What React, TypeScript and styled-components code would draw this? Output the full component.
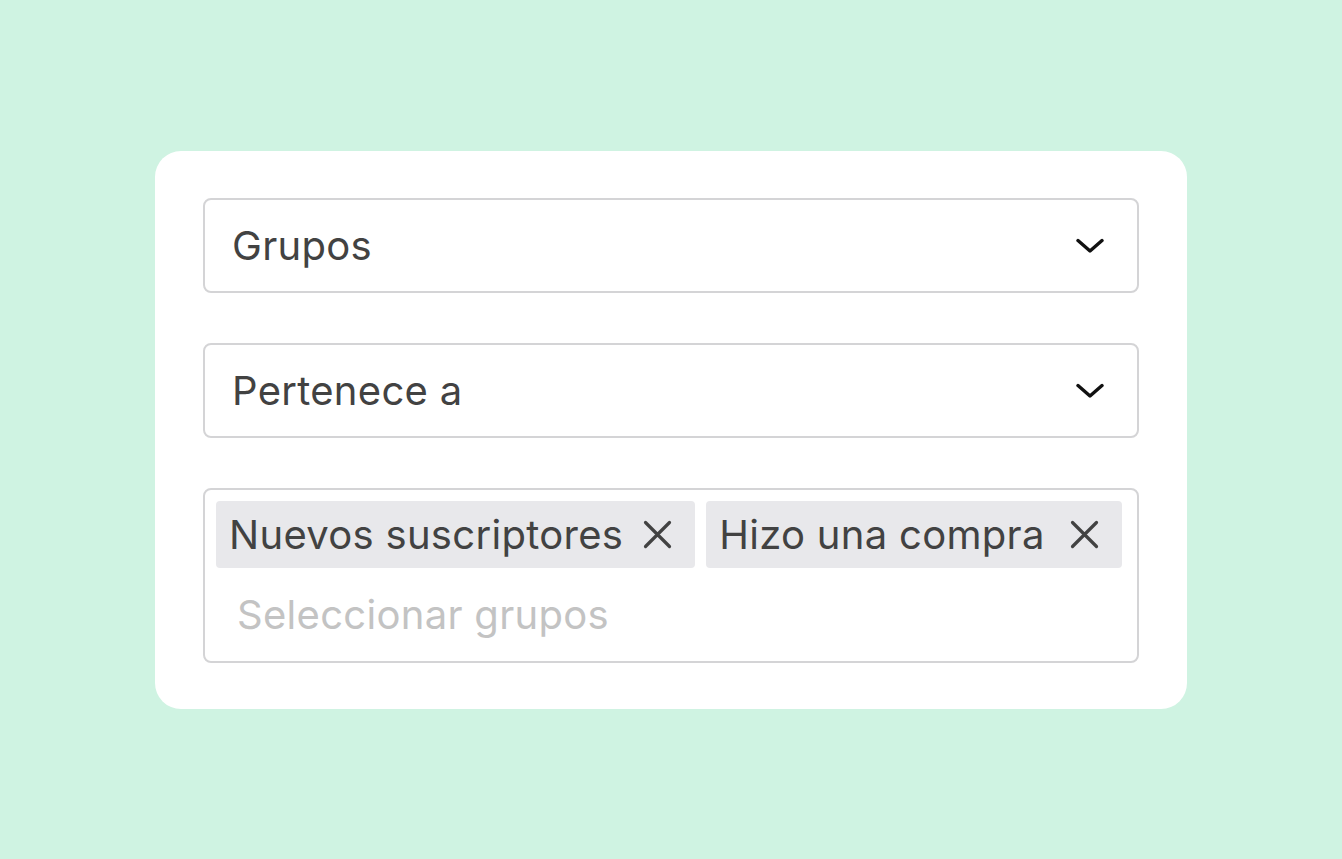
import React from "react";
import styled, { createGlobalStyle } from "styled-components";

const GlobalStyle = createGlobalStyle`
  html, body {
    margin: 0;
    padding: 0;
    background: #cff3e2;
    font-family: Inter, "Noto Sans", sans-serif;
    letter-spacing: 0.3px;
  }
`;

const Page = styled.div`
  width: 1342px;
  height: 859px;
  padding-top: 151px;
  padding-left: 155px;
  box-sizing: border-box;
`;

const Card = styled.div`
  width: 1032px;
  box-sizing: border-box;
  background: #fff;
  border-radius: 26px;
  padding: 47px 48px 46px;
  display: flex;
  flex-direction: column;
  gap: 50px;
`;

const Select = styled.div`
  height: 95px;
  box-sizing: border-box;
  border: 2px solid #d4d4d6;
  border-radius: 8px;
  display: flex;
  align-items: center;
  justify-content: space-between;
  padding: 0 33px 0 27px;
  color: #424242;
  font-size: 40px;
`;

const MultiBox = styled.div`
  height: 175px;
  box-sizing: border-box;
  border: 2px solid #d4d4d6;
  border-radius: 8px;
  padding: 11px 0 0 11px;
  display: flex;
  flex-direction: column;
`;

const ChipRow = styled.div`
  display: flex;
  gap: 11px;
`;

const Chip = styled.div<{ $gap: number }>`
  flex-shrink: 0;
  white-space: nowrap;
  height: 67px;
  background: #e8e8eb;
  border-radius: 4px;
  display: flex;
  align-items: center;
  padding: 0 23px 0 13px;
  gap: ${(p) => p.$gap}px;
  color: #424242;
  font-size: 40px;
`;

const Placeholder = styled.div`
  color: #c3c3c3;
  font-size: 40px;
  padding: 22px 0 0 21px;
`;

const Chevron = () => (
  <svg width="28" height="16" viewBox="0 0 28 16" fill="none">
    <path d="M2 2.5 L14 13 L26 2.5" stroke="#111" strokeWidth="3.4" strokeLinecap="round" strokeLinejoin="round" />
  </svg>
);

const Close = () => (
  <svg width="29" height="29" viewBox="0 0 29 29" fill="none">
    <path d="M2.5 2.5 L26.5 26.5 M26.5 2.5 L2.5 26.5" stroke="#424242" strokeWidth="3.2" strokeLinecap="round" />
  </svg>
);

export default function App() {
  return (
    <>
      <GlobalStyle />
      <Page>
        <Card>
          <Select>
            <span>Grupos</span>
            <Chevron />
          </Select>
          <Select>
            <span>Pertenece a</span>
            <Chevron />
          </Select>
          <MultiBox>
            <ChipRow>
              <Chip $gap={20}>
                <span>Nuevos suscriptores</span>
                <Close />
              </Chip>
              <Chip $gap={25}>
                <span>Hizo una compra</span>
                <Close />
              </Chip>
            </ChipRow>
            <Placeholder>Seleccionar grupos</Placeholder>
          </MultiBox>
        </Card>
      </Page>
    </>
  );
}
